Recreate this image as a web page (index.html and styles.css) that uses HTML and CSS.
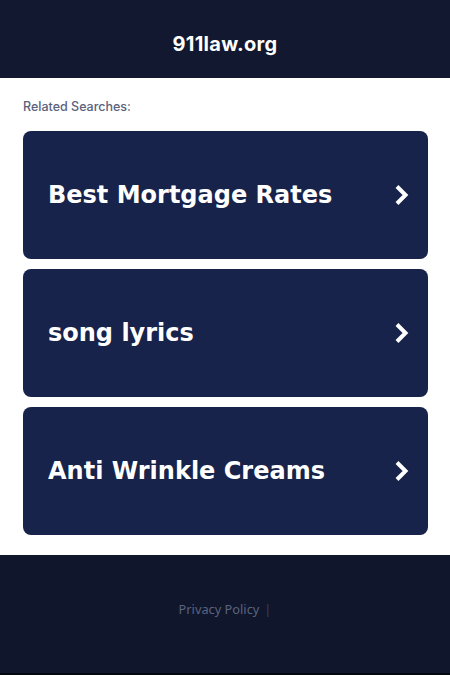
FILE: index.html
```html
<!DOCTYPE html>
<html lang="en">
<head>
    <meta charset="UTF-8">
    <meta name="viewport" content="width=device-width, initial-scale=1.0">
    <title>911law.org</title>
    <link rel="stylesheet" href="styles.css">
</head>
<body>
    <!-- header -->
    <div class="header">
        <span class="domain">911law.org</span>
    </div>

    <!-- related searches -->
    <div class="content">
        <p class="related-title">Related Searches:</p>
        <div class="links">
            <a class="link-card" href="#">
                <span>Best Mortgage Rates</span>
                <svg class="chevron" width="16" height="24" viewBox="0 0 16 24"><path d="M3 3.5 L11.5 12 L3 20.5" fill="none" stroke="#fff" stroke-width="4"/></svg>
            </a>
            <a class="link-card" href="#">
                <span>song lyrics</span>
                <svg class="chevron" width="16" height="24" viewBox="0 0 16 24"><path d="M3 3.5 L11.5 12 L3 20.5" fill="none" stroke="#fff" stroke-width="4"/></svg>
            </a>
            <a class="link-card" href="#">
                <span>Anti Wrinkle Creams</span>
                <svg class="chevron" width="16" height="24" viewBox="0 0 16 24"><path d="M3 3.5 L11.5 12 L3 20.5" fill="none" stroke="#fff" stroke-width="4"/></svg>
            </a>
        </div>
    </div>

    <!-- footer -->
    <div class="footer">
        <a href="#">Privacy Policy</a>
        <span class="sep">|</span>
    </div>
</body>
</html>
```

FILE: styles.css
```css
/* base */
body {
    margin: 0;
    padding: 0;
    background-color: #fff;
    font-family: "DejaVu Sans", sans-serif;
}

/* header */
.header {
    background-color: #111830;
    height: 78px;
    display: flex;
    justify-content: center;
    align-items: center;
}

.domain {
    color: #fff;
    font-family: Inter, sans-serif;
    font-weight: 700;
    font-size: 20px;
    letter-spacing: 0.3px;
    padding-top: 10px;
}

/* related searches */
.content {
    padding: 0 22px 20px 23px;
}

.related-title {
    margin: 0;
    padding: 21px 0 17px;
    font-family: Inter, sans-serif;
    font-size: 12.5px;
    font-weight: 500;
    color: #5b627d;
}

.links {
    display: flex;
    flex-direction: column;
    gap: 10px;
}

.link-card {
    display: flex;
    justify-content: space-between;
    align-items: center;
    height: 128px;
    padding: 0 18px 0 25px;
    background-color: #17234a;
    border-radius: 8px;
    color: #fff;
    text-decoration: none;
    font-weight: 700;
    font-size: 24px;
}

.chevron {
    flex-shrink: 0;
}

/* footer */
.footer {
    background-color: #10162b;
    height: 120px;
    box-sizing: border-box;
    padding-top: 45px;
    border-bottom: 2px solid #05070f;
    display: flex;
    justify-content: center;
    align-items: flex-start;
    font-family: "Noto Sans", sans-serif;
    font-size: 12.8px;
}

.footer a {
    color: #5b637f;
    text-decoration: none;
}

.footer .sep {
    color: #3b425c;
    margin-left: 5px;
}
```
